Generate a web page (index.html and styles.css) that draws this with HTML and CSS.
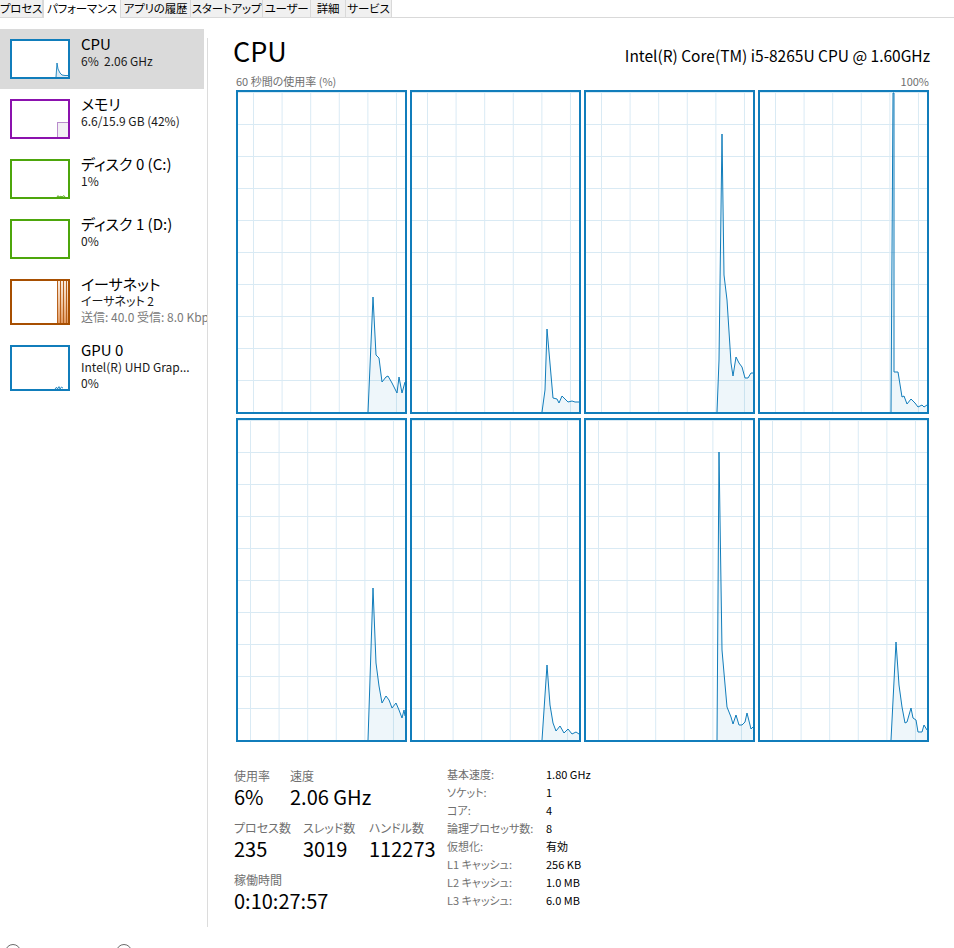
FILE: index.html
```html
<!DOCTYPE html>
<html lang="ja">
<head>
<meta charset="utf-8">
<title>タスク マネージャー - パフォーマンス</title>
<link rel="stylesheet" href="styles.css">
</head>
<body>
<div class="tabs">
  <div class="tab t-process">プロセス</div>
  <div class="tab active t-perf">パフォーマンス</div>
  <div class="tab t-history">アプリの履歴</div>
  <div class="tab t-startup">スタートアップ</div>
  <div class="tab t-users">ユーザー</div>
  <div class="tab t-details">詳細</div>
  <div class="tab t-services">サービス</div>
</div>

<div class="main">
  <nav class="sidebar">
    <div class="item selected">
      <div class="thumb blue">
        <svg viewBox="0 0 56 36" preserveAspectRatio="none">
          <path class="fill-blue" d="M44 36 L45 22 L46 28 L48 32 L50 34 L53 34.5 L56 34.5 L56 36 Z"/>
          <polyline class="line-blue" points="44,36 45,22 46,28 48,32 50,34 53,34.5 56,34.5"/>
        </svg>
      </div>
      <div class="info">
        <div class="name">CPU</div>
        <div class="sub">6%  2.06 GHz</div>
      </div>
    </div>
    <div class="item">
      <div class="thumb purple">
        <svg viewBox="0 0 56 36" preserveAspectRatio="none">
          <rect x="45.5" y="21.5" width="11" height="15" fill="#f2eff4" stroke="#b98ccc" stroke-width="1"/>
        </svg>
      </div>
      <div class="info">
        <div class="name">メモリ</div>
        <div class="sub">6.6/15.9 GB (42%)</div>
      </div>
    </div>
    <div class="item">
      <div class="thumb green">
        <svg viewBox="0 0 56 36" preserveAspectRatio="none">
          <polyline class="line-green" points="45,36 46,34.6 47,36 49,35.2 50,36 52,34.6 53,36"/>
        </svg>
      </div>
      <div class="info">
        <div class="name">ディスク 0 (C:)</div>
        <div class="sub">1%</div>
      </div>
    </div>
    <div class="item">
      <div class="thumb green"></div>
      <div class="info">
        <div class="name">ディスク 1 (D:)</div>
        <div class="sub">0%</div>
      </div>
    </div>
    <div class="item tall">
      <div class="thumb orange">
        <svg viewBox="0 0 56 42" preserveAspectRatio="none">
          <defs>
            <linearGradient id="eth" x1="0" y1="0" x2="0" y2="1">
              <stop offset="0" stop-color="#f8ebe0"/>
              <stop offset="0.5" stop-color="#efc7a6"/>
              <stop offset="1" stop-color="#e29a62"/>
            </linearGradient>
          </defs>
          <rect x="45" y="0" width="11" height="42" fill="url(#eth)"/>
          <line class="line-orange" x1="45.5" y1="0" x2="45.5" y2="42"/>
          <line class="line-orange" x1="48.5" y1="0" x2="48.5" y2="42"/>
          <line class="line-orange" x1="51.5" y1="0" x2="51.5" y2="42"/>
          <line class="line-orange" x1="54.5" y1="0" x2="54.5" y2="42"/>
        </svg>
      </div>
      <div class="info">
        <div class="name">イーサネット</div>
        <div class="sub">イーサネット 2</div>
        <div class="sub muted">送信: 40.0 受信: 8.0 Kbps</div>
      </div>
    </div>
    <div class="item tall">
      <div class="thumb blue">
        <svg viewBox="0 0 56 42" preserveAspectRatio="none">
          <polyline class="line-blue" points="43,42 44.5,40.2 45.5,42 47,39.6 48,42 49.5,40 51,41.2"/>
        </svg>
      </div>
      <div class="info">
        <div class="name">GPU 0</div>
        <div class="sub">Intel(R) UHD Grap...</div>
        <div class="sub">0%</div>
      </div>
    </div>
  </nav>

  <div class="divider"></div>

  <section class="content">
    <header class="head">
      <h1 class="title">CPU</h1>
      <div class="model">Intel(R) Core(TM) i5-8265U CPU @ 1.60GHz</div>
    </header>
    <div class="axis">
      <span>60 秒間の使用率 (%)</span>
      <span>100%</span>
    </div>

    <div class="graphs">
      <div class="graph top">
        <svg viewBox="2 2 167 320" preserveAspectRatio="none">
          <polygon class="area" points="132,322 137,207 140,265 143,268 146,292 150,287 152,286 156,293 161,303 163,287 166,303 169,292 169,322"/>
          <polyline class="plot" points="132,322 137,207 140,265 143,268 146,292 150,287 152,286 156,293 161,303 163,287 166,303 169,292"/>
        </svg>
      </div>
      <div class="graph top">
        <svg viewBox="2 2 167 320" preserveAspectRatio="none">
          <polygon class="area" points="132,322 135,300 137,239 143,308 147,309 149,313 152,306 158,312 162,311 165,312 169,312 169,322"/>
          <polyline class="plot" points="132,322 135,300 137,239 143,308 147,309 149,313 152,306 158,312 162,311 165,312 169,312"/>
        </svg>
      </div>
      <div class="graph top">
        <svg viewBox="2 2 167 320" preserveAspectRatio="none">
          <polygon class="area" points="133,322 135,270 138,44 140,185 143,210 147,273 149,286 152,267 155,273 158,277 161,288 164,288 167,283 169,283 169,322"/>
          <polyline class="plot" points="133,322 135,270 138,44 140,185 143,210 147,273 149,286 152,267 155,273 158,277 161,288 164,288 167,283 169,283"/>
        </svg>
      </div>
      <div class="graph top">
        <svg viewBox="2 2 167 320" preserveAspectRatio="none">
          <polygon class="area" points="133,322 135,3 136,3 136,282 140,282 144,307 146,306 149,314 153,309 157,313 160,317 164,315 166,317 169,315 169,322"/>
          <polyline class="plot" points="133,322 135,3 136,3 136,282 140,282 144,307 146,306 149,314 153,309 157,313 160,317 164,315 166,317 169,315"/>
        </svg>
      </div>
      <div class="graph bottom">
        <svg viewBox="2 2 167 320" preserveAspectRatio="none">
          <polygon class="area" points="132,322 137,170 140,245 143,268 146,285 150,278 153,282 156,290 160,285 163,292 166,300 168,292 169,298 169,322"/>
          <polyline class="plot" points="132,322 137,170 140,245 143,268 146,285 150,278 153,282 156,290 160,285 163,292 166,300 168,292 169,298"/>
        </svg>
      </div>
      <div class="graph bottom">
        <svg viewBox="2 2 167 320" preserveAspectRatio="none">
          <polygon class="area" points="132,322 137,247 140,287 143,305 146,313 150,308 154,315 158,311 162,316 166,314 169,316 169,322"/>
          <polyline class="plot" points="132,322 137,247 140,287 143,305 146,313 150,308 154,315 158,311 162,316 166,314 169,316"/>
        </svg>
      </div>
      <div class="graph bottom">
        <svg viewBox="2 2 167 320" preserveAspectRatio="none">
          <polygon class="area" points="133,322 135,34 138,232 140,255 143,289 147,299 149,306 152,297 155,307 158,307 161,304 163,295 167,311 169,309 169,322"/>
          <polyline class="plot" points="133,322 135,34 138,232 140,255 143,289 147,299 149,306 152,297 155,307 158,307 161,304 163,295 167,311 169,309"/>
        </svg>
      </div>
      <div class="graph bottom">
        <svg viewBox="2 2 167 320" preserveAspectRatio="none">
          <polygon class="area" points="133,322 138,224 141,267 144,289 147,305 149,304 153,290 155,300 158,302 160,314 164,314 166,307 169,312 169,322"/>
          <polyline class="plot" points="133,322 138,224 141,267 144,289 147,305 149,304 153,290 155,300 158,302 160,314 164,314 166,307 169,312"/>
        </svg>
      </div>
    </div>

    <div class="stats">
      <div class="stats-left">
        <div class="srow">
          <div class="stat c1"><div class="label">使用率</div><div class="value">6%</div></div>
          <div class="stat"><div class="label">速度</div><div class="value">2.06 GHz</div></div>
        </div>
        <div class="srow">
          <div class="stat c2"><div class="label">プロセス数</div><div class="value">235</div></div>
          <div class="stat c3"><div class="label">スレッド数</div><div class="value">3019</div></div>
          <div class="stat"><div class="label">ハンドル数</div><div class="value">112273</div></div>
        </div>
        <div class="srow">
          <div class="stat"><div class="label">稼働時間</div><div class="value">0:10:27:57</div></div>
        </div>
      </div>
      <dl class="specs">
        <dt>基本速度:</dt><dd>1.80 GHz</dd>
        <dt>ソケット:</dt><dd>1</dd>
        <dt>コア:</dt><dd>4</dd>
        <dt>論理プロセッサ数:</dt><dd>8</dd>
        <dt>仮想化:</dt><dd>有効</dd>
        <dt>L1 キャッシュ:</dt><dd>256 KB</dd>
        <dt>L2 キャッシュ:</dt><dd>1.0 MB</dd>
        <dt>L3 キャッシュ:</dt><dd>6.0 MB</dd>
      </dl>
    </div>
  </section>
</div>

<footer class="footer">
  <span class="circle"></span><span class="flink">簡易表示(D)</span>
  <span class="circle"></span><span class="flink">リソース モニターを開く</span>
</footer>
</body>
</html>
```

FILE: styles.css
```css
* { box-sizing: border-box; }

html, body {
  margin: 0;
  padding: 0;
  background: #ffffff;
}

body {
  width: 954px;
  height: 948px;
  overflow: hidden;
  font-family: "Noto Sans CJK JP", "Noto Sans", sans-serif;
  font-feature-settings: "palt" 1;
  color: #000;
}

/* ---------- tabs ---------- */
.tabs {
  display: flex;
  height: 18px;
  border-bottom: 1px solid #d9d9d9;
}

.tab {
  display: flex;
  justify-content: center;
  height: 17px;
  font-size: 11.5px;
  line-height: 16px;
  letter-spacing: -0.2px;
  background: #f0f0f0;
  border-right: 1px solid #d9d9d9;
  white-space: nowrap;
}

.tab.active {
  height: 18px;
  background: #fff;
  border-left: 1px solid #d9d9d9;
}

.t-process { width: 43px; }
.t-perf { width: 78px; }
.t-history { width: 70px; }
.t-startup { width: 72px; }
.t-users { width: 48px; }
.t-details { width: 35px; }
.t-services { width: 46px; }

/* ---------- main ---------- */
.main {
  display: flex;
  height: 922px;
}

.sidebar {
  width: 207px;
  flex: none;
  padding-top: 11px;
  overflow: hidden;
}

.item {
  display: flex;
  width: 204px;
  height: 60px;
  padding: 10px 0 0 10px;
  white-space: nowrap;
}

.item.tall {
  height: 66px;
}

.item.selected {
  background: #dadada;
}

.thumb {
  flex: none;
  width: 60px;
  height: 40px;
  border: 2px solid #117dbb;
  background: #fff;
}

.item.tall .thumb {
  height: 46px;
}

.thumb svg {
  display: block;
  width: 100%;
  height: 100%;
}

.thumb.blue { border-color: #117dbb; }
.thumb.purple { border-color: #8b12ae; }
.thumb.green { border-color: #4da60c; }
.thumb.orange { border-color: #a74f01; }

.fill-blue { fill: #dcebf5; }
.line-blue { fill: none; stroke: #117dbb; stroke-width: 0.9; }
.line-green { fill: none; stroke: #4da60c; stroke-width: 0.9; }
.line-orange { stroke: #b8611c; stroke-width: 1; }

.info {
  margin-left: 11px;
  margin-top: -4px;
  width: 126px;
}

.name {
  font-size: 15px;
  line-height: 18px;
}

.sub {
  font-size: 12px;
  line-height: 16px;
  white-space: pre;
  color: #1a1a1a;
}

.sub.muted {
  color: #7a7a7a;
}

.divider {
  flex: none;
  width: 1px;
  height: 889px;
  margin-top: 20px;
  background: #dcdcdc;
}

/* ---------- content ---------- */
.content {
  flex: 1;
  padding: 0 24px 0 28px;
}

.head {
  display: flex;
  justify-content: space-between;
  align-items: baseline;
  margin-top: 17px;
  width: 694px;
}

.title {
  margin: 0 0 0 -3px;
  font-size: 27px;
  line-height: 32px;
  font-weight: 400;
}

.model {
  font-size: 15.5px;
  line-height: 20px;
}

.axis {
  display: flex;
  justify-content: space-between;
  width: 693px;
  margin-top: 7px;
  font-size: 11px;
  line-height: 14px;
  color: #707070;
}

.graphs {
  display: grid;
  grid-template-columns: repeat(4, 171px);
  grid-template-rows: 324px 324px;
  column-gap: 3px;
  row-gap: 4px;
  margin-top: 2px;
}

.graph {
  border: 2px solid #117dbb;
  background-color: #fff;
  background-image:
    linear-gradient(90deg, #d9eaf4 1px, transparent 1px),
    linear-gradient(180deg, #d9eaf4 1px, transparent 1px);
  background-size: 28.6px 100%, 100% 32px;
}

.graph.top { background-position: 15px 0, 0 0; }
.graph.bottom { background-position: 12px 0, 0 0; }

.graph svg {
  display: block;
  width: 100%;
  height: 100%;
}

.area { fill: rgba(17, 125, 187, 0.07); stroke: none; }
.plot { fill: none; stroke: #117dbb; stroke-width: 1; stroke-linejoin: miter; }

/* ---------- stats ---------- */
.stats {
  display: flex;
  align-items: flex-start;
  margin-top: 25px;
  margin-left: -2px;
}

.stats-left {
  width: 213px;
  flex: none;
}

.srow {
  display: flex;
  margin-bottom: 9px;
}

.stat.c1 { width: 56px; }
.stat.c2 { width: 69px; }
.stat.c3 { width: 66px; }

.label {
  font-size: 12px;
  line-height: 17px;
  color: #707070;
}

.value {
  font-size: 20px;
  line-height: 26px;
  color: #000;
}

.specs {
  display: grid;
  grid-template-columns: 99px auto;
  margin: -2px 0 0 0;
  font-size: 11px;
  line-height: 18px;
}

.specs dt {
  color: #707070;
}

.specs dd {
  margin: 0;
  color: #000;
}

/* ---------- footer ---------- */
.footer {
  display: flex;
  align-items: flex-start;
  padding: 4px 0 0 5px;
  font-size: 12px;
  line-height: 18px;
  color: #1a5fb4;
}

.circle {
  width: 16px;
  height: 16px;
  border: 1px solid #6b6b6b;
  border-radius: 50%;
  flex: none;
}

.flink {
  margin: 4px 16px 0 6px;
  width: 73px;
  white-space: nowrap;
}
```
